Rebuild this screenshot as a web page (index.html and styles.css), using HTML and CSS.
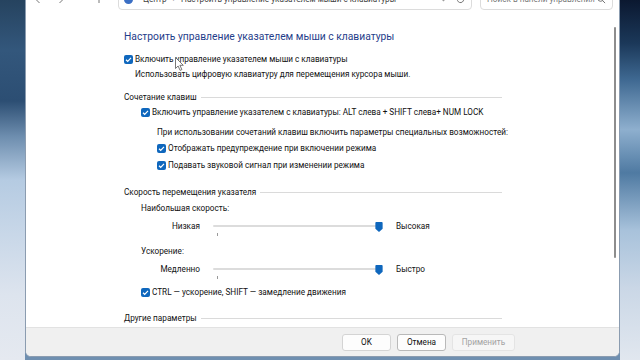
FILE: index.html
```html
<!DOCTYPE html>
<html lang="ru">
<head>
  <meta charset="UTF-8">
  <title>Настроить управление указателем мыши с клавиатуры</title>
  <link rel="stylesheet" href="styles.css">
</head>
<body>

  <div class="window">
    <div class="toolbar">
      <div class="nav">
        <svg class="nav-btn" viewBox="0 0 10 10"><path d="M6.5 1L2.5 5l4 4"/></svg>
        <svg class="nav-btn" viewBox="0 0 10 10"><path d="M3.5 1l4 4-4 4"/></svg>
        <svg class="nav-btn up" viewBox="0 0 10 10"><path d="M5 9V1M1.5 4.5L5 1l3.5 3.5"/></svg>
      </div>
      <div class="address">
        <span class="cp-icon"></span>
        <span class="crumb">Центр</span>
        <span class="crumb-sep">›</span>
        <span class="crumb">Настроить управление указателем мыши с клавиатуры</span>
        <span class="addr-tools">
          <svg viewBox="0 0 10 10"><path d="M2 3.5l3 3 3-3"/></svg>
          <svg viewBox="0 0 10 10"><path d="M8.5 5a3.5 3.5 0 1 1-1-2.5M7.5 0.8v2h-2"/></svg>
        </span>
      </div>
      <div class="search">
        <span>Поиск в панели управления</span>
        <svg viewBox="0 0 10 10"><circle cx="4" cy="4" r="3"/><path d="M6.2 6.2L9 9"/></svg>
      </div>
    </div>

    <div class="main">
      <div class="panel">
        <div class="heading">Настроить управление указателем мыши с клавиатуры</div>

        <label class="row sp-6">
          <span class="cb"><svg viewBox="0 0 9 9"><path d="M2 4.7l1.7 1.6L7 2.8"/></svg></span>
          Включить управление указателем мыши с клавиатуры
        </label>
        <div class="row sp-1 in-1">Использовать цифровую клавиатуру для перемещения курсора мыши.</div>

        <div class="row sp-9 group-title"><span>Сочетание клавиш</span><span class="rule"></span></div>
        <label class="row sp-1 in-2">
          <span class="cb"><svg viewBox="0 0 9 9"><path d="M2 4.7l1.7 1.6L7 2.8"/></svg></span>
          Включить управление указателем с клавиатуры: ALT слева + SHIFT слева+ NUM LOCK
        </label>
        <div class="row sp-6 in-3">При использовании сочетаний клавиш включить параметры специальных возможностей:</div>
        <label class="row sp-2 in-3">
          <span class="cb"><svg viewBox="0 0 9 9"><path d="M2 4.7l1.7 1.6L7 2.8"/></svg></span>
          Отображать предупреждение при включении режима
        </label>
        <label class="row sp-3 in-3">
          <span class="cb"><svg viewBox="0 0 9 9"><path d="M2 4.7l1.7 1.6L7 2.8"/></svg></span>
          Подавать звуковой сигнал при изменении режима
        </label>

        <div class="row sp-13 group-title"><span>Скорость перемещения указателя</span><span class="rule"></span></div>
        <div class="row sp-2 in-2">Наибольшая скорость:</div>
        <div class="row sp-4 in-2">
          <span class="slider-label">Низкая</span>
          <span class="slider">
            <span class="track"></span>
            <span class="tick"></span>
            <svg class="thumb" viewBox="0 0 8 11"><path d="M1 0h6a1 1 0 0 1 1 1v6.5L4 11 0 7.5V1a1 1 0 0 1 1-1z"/></svg>
          </span>
          <span>Высокая</span>
        </div>
        <div class="row sp-11 in-2">Ускорение:</div>
        <div class="row sp-4 in-2">
          <span class="slider-label">Медленно</span>
          <span class="slider">
            <span class="track"></span>
            <span class="tick"></span>
            <svg class="thumb" viewBox="0 0 8 11"><path d="M1 0h6a1 1 0 0 1 1 1v6.5L4 11 0 7.5V1a1 1 0 0 1 1-1z"/></svg>
          </span>
          <span>Быстро</span>
        </div>
        <label class="row sp-9 in-2">
          <span class="cb"><svg viewBox="0 0 9 9"><path d="M2 4.7l1.7 1.6L7 2.8"/></svg></span>
          CTRL — ускорение, SHIFT — замедление движения
        </label>

        <div class="row sp-12 group-title"><span>Другие параметры</span><span class="rule"></span></div>
      </div>
      <div class="scroll"><div class="scroll-thumb"></div></div>
    </div>

    <div class="footer">
      <button class="btn">OK</button>
      <button class="btn focused">Отмена</button>
      <button class="btn wide" disabled>Применить</button>
    </div>
  </div>

  <!-- mouse pointer -->
  <svg class="cursor" viewBox="0 0 9 14"><path d="M0.5 0.5v11l2.6-2.5 2 4.4 1.8-0.8-2-4.3H8.3z"/></svg>

</body>
</html>
```

FILE: styles.css
```css
* {
  box-sizing: border-box;
}

body {
  margin: 0;
  width: 640px;
  height: 360px;
  overflow: hidden;
  position: relative;
  font-family: Roboto, 'Noto Sans', sans-serif;
  font-size: 8.2px;
  color: #111;
  background:
    linear-gradient(180deg, #26435f 0%, #33577c 14%, #2c4e73 28%, #6e8eaf 38%, #b5cbe2 50%, #c8d7e8 65%, #dde4ee 82%, #e5e9f0 100%) left top / 25px 100% no-repeat,
    linear-gradient(180deg, #0b1830 0%, #1b3859 12%, #3e6891 22%, #8eafce 36%, #4f7aa2 48%, #a8c2db 64%, #cad7e6 80%, #e1e7ef 100%) right top / 20px 100% no-repeat,
    #6f8fb0;
}

.window {
  margin: -14px 0 0 25px;
  width: 595px;
  height: 371px;
  background: #fff;
  border: 1px solid #8b9cb0;
  border-radius: 0 0 6px 6px;
  display: flex;
  flex-direction: column;
  overflow: hidden;
}

/* address bar, mostly scrolled off the top */
.toolbar {
  height: 25px;
  padding-top: 1px;
  display: flex;
  align-items: flex-start;
  color: #444;
}

.nav {
  width: 92px;
  height: 22px;
  display: flex;
  align-items: center;
  padding-left: 7px;
  gap: 13px;
}

.nav-btn {
  width: 10px;
  height: 10px;
  fill: none;
  stroke: #777;
  stroke-width: 1;
}

.nav-btn.up {
  margin-left: 15px;
}

.address {
  width: 354px;
  height: 22px;
  border: 1px solid #dcdcdc;
  border-radius: 4px;
  display: flex;
  align-items: center;
  padding: 0 6px 0 5px;
  gap: 6px;
  white-space: nowrap;
}

.cp-icon {
  width: 9px;
  height: 9px;
  border-radius: 50%;
  background: #3b6fc4;
  margin-right: 4px;
}

.crumb-sep {
  color: #888;
}

.addr-tools {
  margin-left: auto;
  display: flex;
  gap: 8px;
}

.addr-tools svg,
.search svg {
  width: 9px;
  height: 9px;
  fill: none;
  stroke: #666;
  stroke-width: 1;
}

.search {
  width: 133px;
  height: 22px;
  margin-left: 8px;
  border: 1px solid #dcdcdc;
  border-radius: 4px;
  display: flex;
  align-items: center;
  justify-content: space-between;
  padding: 0 6px;
  color: #777;
  white-space: nowrap;
}

.main {
  flex: 1;
  display: flex;
}

.panel {
  flex: 1;
  padding: 16px 0 0 98px;
}

.scroll {
  width: 8px;
}

.scroll-thumb {
  width: 2px;
  height: 231px;
  margin: 15px 0 0 3px;
  background: #8d8d8d;
  border-radius: 1px;
}

.heading {
  height: 18px;
  line-height: 18px;
  font-size: 10.3px;
  color: #1f3d8a;
}

.row {
  display: flex;
  align-items: center;
  height: 14px;
  white-space: nowrap;
}

.sp-1 { margin-top: 1px; }
.sp-2 { margin-top: 2px; }
.sp-3 { margin-top: 3px; }
.sp-4 { margin-top: 4px; }
.sp-6 { margin-top: 6px; }
.sp-9 { margin-top: 9px; }
.sp-11 { margin-top: 11px; }
.sp-12 { margin-top: 12px; }
.sp-13 { margin-top: 13px; }

.in-1 { padding-left: 11px; }
.in-2 { padding-left: 17px; }
.in-3 { padding-left: 33px; }

.cb {
  width: 9px;
  height: 9px;
  margin-right: 2px;
  border-radius: 2px;
  background: #0f67bd;
  display: flex;
}

.cb svg {
  width: 9px;
  height: 9px;
  fill: none;
  stroke: #fff;
  stroke-width: 1.2;
}

.group-title {
  width: 378px;
}

.rule {
  flex: 1;
  height: 1px;
  margin-left: 4px;
  background: #dadada;
}

.slider-label {
  width: 59px;
  text-align: right;
}

.slider {
  width: 168px;
  height: 14px;
  margin: 0 15px 0 13px;
  position: relative;
}

.track {
  display: block;
  height: 2px;
  margin-top: 6px;
  background: #dcdcdc;
  border-radius: 1px;
}

.tick {
  position: absolute;
  left: 4px;
  top: 14px;
  width: 1px;
  height: 3px;
  background: #9a9a9a;
}

.thumb {
  position: absolute;
  left: 162px;
  top: 3px;
  width: 8px;
  height: 10px;
  fill: #0f67bd;
}

.footer {
  height: 29px;
  background: #f0f0f0;
  border-top: 1px solid #e2e2e2;
  display: flex;
  align-items: center;
  justify-content: flex-end;
  gap: 6px;
  padding-right: 104px;
}

.btn {
  width: 49px;
  height: 17px;
  padding: 0;
  font-family: inherit;
  font-size: 8.2px;
  color: #111;
  background: #fdfdfd;
  border: 1px solid #d4d4d4;
  border-radius: 3px;
}

.btn.focused {
  border-color: #b9b9b9;
}

.btn.wide {
  width: 63px;
}

.btn:disabled {
  color: #a2a2a2;
  background: #f6f6f6;
  border-color: #e4e4e4;
}

.cursor {
  position: absolute;
  left: 175px;
  top: 57px;
  width: 9px;
  height: 14px;
  fill: #fff;
  stroke: #555;
  stroke-width: 0.8;
}
```
